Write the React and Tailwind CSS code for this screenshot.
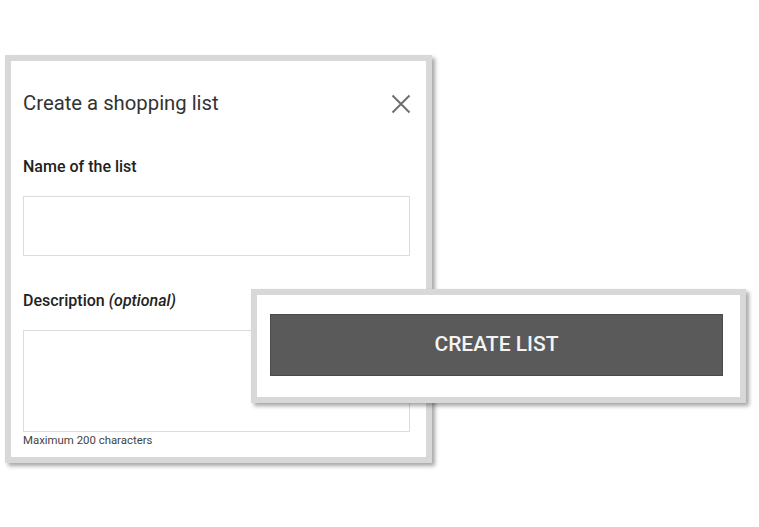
import React from 'react';

const font = { fontFamily: 'Roboto, "Liberation Sans", sans-serif' };

const CloseIcon = () => (
  <svg width="20" height="20" viewBox="0 0 20 20" className="text-[#6f6f6f]">
    <path d="M1.5 1.5 L18.5 18.5 M18.5 1.5 L1.5 18.5" stroke="currentColor" strokeWidth="2" fill="none" />
  </svg>
);

export default function App() {
  return (
    <div className="relative w-[759px] h-[527px] bg-white overflow-hidden font-['Roboto','Liberation_Sans',sans-serif]">
      {/* dialog card */}
      <div className="ml-[5px] mt-[55px] w-[427px] h-[408px] border-[6px] border-[#d8d8d8] bg-white shadow-[3px_3px_4px_rgba(0,0,0,0.35)]">
        <div className="pl-[12px] pr-[16px] pt-[30px] flex flex-col">
          <div className="flex items-center justify-between h-[24px]">
            <h2 className="text-[20.3px] leading-[24px] text-[#333]">Create a shopping list</h2>
            <button className="mr-[-1px] mt-[1px]"><CloseIcon /></button>
          </div>

          <label className="mt-[42px] text-[16px] leading-[20px] font-medium text-[#222]">Name of the list</label>
          <input className="mt-[19px] h-[60px] w-full border border-[#dcdcdc] outline-none" />

          <label className="mt-[35px] text-[16px] leading-[20px] font-medium text-[#222]">
            Description <span className="italic">(optional)</span>
          </label>
          <textarea className="mt-[19px] h-[102px] w-full border border-[#dcdcdc] outline-none resize-none" />
          <p className="mt-[1px] text-[11.4px] leading-[14px] text-[#444]">Maximum 200 characters</p>
        </div>
      </div>

      {/* callout with the button, laid over the dialog */}
      <div className="absolute left-[251px] top-[289px] w-[495px] h-[114px] border-[6px] border-[#d8d8d8] bg-white shadow-[3px_3px_4px_rgba(0,0,0,0.35)] pl-[13px] pt-[19px]">
        <button className="w-[453px] h-[62px] bg-[#5a5a5a] border border-[#4a4a4a] text-[#f4f4f4] text-[21px] font-medium" style={font}>
          CREATE LIST
        </button>
      </div>
    </div>
  );
}
